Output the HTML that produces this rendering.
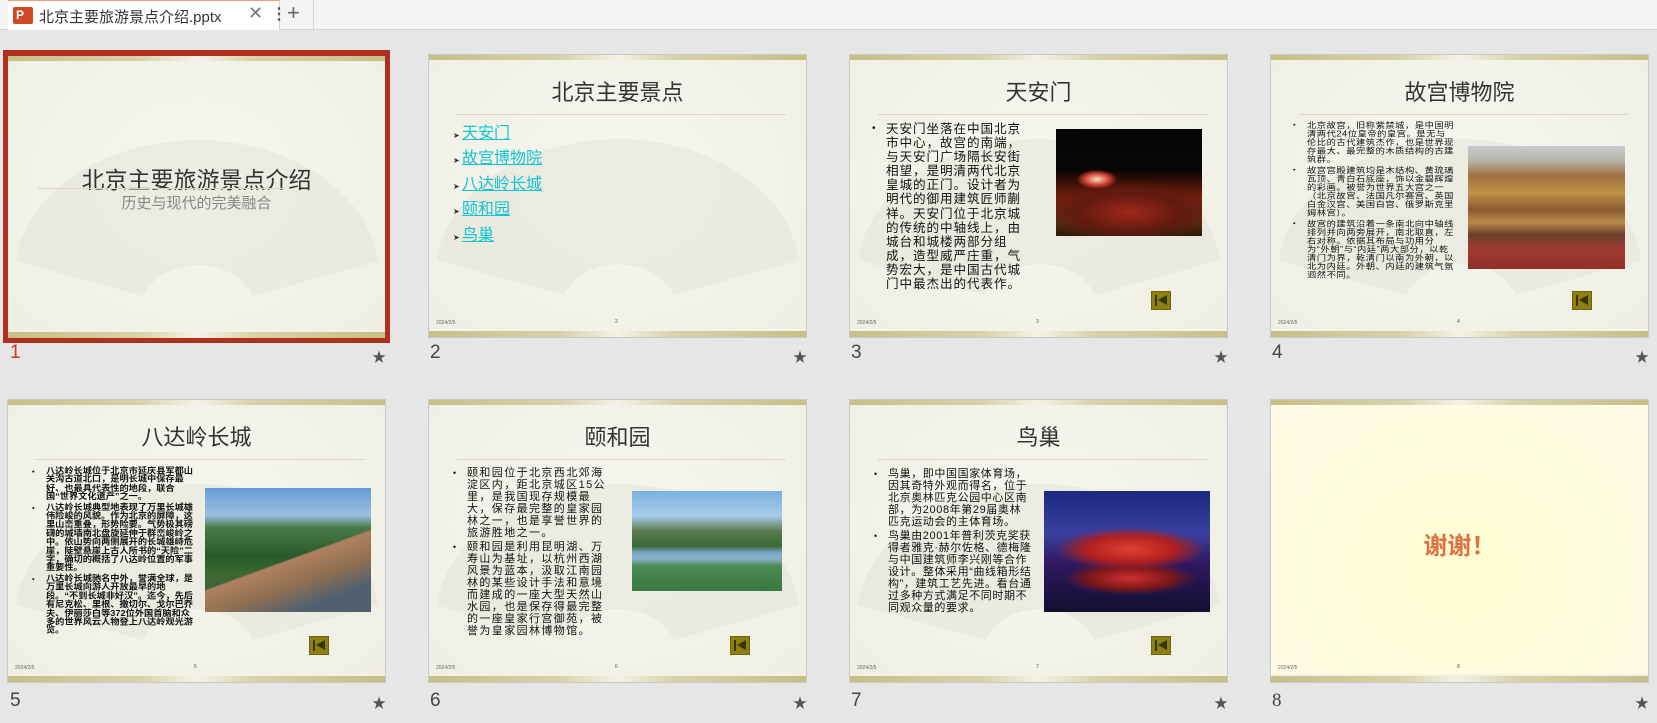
<!DOCTYPE html>
<html><head><meta charset="utf-8"><style>
*{margin:0;padding:0;box-sizing:border-box}
body{width:1657px;height:723px;background:#e6e6e6;position:relative;overflow:hidden;font-family:"Liberation Sans","Noto Sans CJK SC",sans-serif}
.bar{position:absolute;left:0;top:0;width:1657px;height:30px;background:#f4f4f4;border-bottom:1px solid #d4d4d4}
.tab{position:absolute;left:8px;top:0;width:272px;height:30px;background:#fff;border-top:1px solid #f0a080;border-right:1px solid #d4d4d4}
.slide{position:absolute;width:377px;height:282px;background:radial-gradient(ellipse at 50% 45%,#f7f7f0,#efeee4);overflow:hidden;outline:1px solid #c8c8c8}
.slide .tb{position:absolute;left:0;top:0;width:100%;height:5px;background:linear-gradient(90deg,#c8bf86,#d8d2a8 35%,#f4f2e6 50%,#d8d2a8 65%,#c8bf86)}
.slide .bb{position:absolute;left:0;bottom:0;width:100%;height:8px;border-top:2px solid #f4f2e8;background:linear-gradient(90deg,#c8bf86,#d8d2a8 35%,#f4f2e6 50%,#d8d2a8 65%,#c8bf86)}
.fan{position:absolute;left:0;top:0}
.title{position:absolute;left:0;width:100%;top:20px;text-align:center;font-size:22px;color:#333}
.rule{position:absolute;left:28px;right:20px;top:59px;height:1px;background:#dcd8bc}
.foot{position:absolute;left:7px;top:265px;font-size:5px;color:#666}
.pn{position:absolute;left:186px;top:264px;font-size:5px;color:#555}
.back{position:absolute;left:301px;top:236px;width:20px;height:19px;background:#8b8010;border:1px solid #6e650a}
.back:before{content:"";position:absolute;left:3px;top:3px;width:2px;height:11px;background:#3a3500}
.back:after{content:"";position:absolute;left:6px;top:3px;border-right:9px solid #3a3500;border-top:5.5px solid transparent;border-bottom:5.5px solid transparent}
.txt{position:absolute;color:#111;transform-origin:0 0}
.txt p{position:relative;padding-left:14px}
.txt p:before{content:"•";position:absolute;left:0;top:0;font-size:0.8em;letter-spacing:0}
.img{position:absolute}
.lbl{position:absolute;font-size:19px;color:#444}
.star{position:absolute;font-size:14px;color:#555}
</style></head><body>
<div class="bar"></div>
<div class="tab">
 <div style="position:absolute;left:5px;top:6px;width:20px;height:17px;background:#d24726;border-radius:2px"></div>
 <div style="position:absolute;left:8px;top:8px;color:#fff;font-size:12px;font-weight:bold;line-height:13px">P</div>
 <div style="position:absolute;left:31px;top:5px;font-size:15px;color:#333">北京主要旅游景点介绍.pptx</div>
 <div style="position:absolute;left:240px;top:2px;font-size:18px;color:#777">✕</div>
 <div style="position:absolute;left:263px;top:3px;font-size:16px;color:#555;font-weight:bold">⋮</div>
</div>
<div style="position:absolute;left:287px;top:0px;font-size:22px;color:#666">+</div>
<div style="position:absolute;left:313px;top:0;width:1px;height:30px;background:#d4d4d4"></div>

<!-- Slide 1 -->
<div style="position:absolute;left:3px;top:50px;width:387px;height:293px;background:#b03020"></div>
<div class="slide" style="left:8px;top:56px;outline:none">
 <svg class="fan" width="377" height="282"><path d="M8 205 A182 135 0 0 1 370 205 L245 240 A58 45 0 0 0 135 240 Z" fill="#e2e1d6" opacity=".5"/></svg>
 <div class="tb"></div><div class="bb"></div>
 <div style="position:absolute;left:0;width:100%;top:105px;text-align:center;font-size:23px;color:#333">北京主要旅游景点介绍</div>
 <div style="position:absolute;left:30px;right:100px;top:132px;height:1px;background:#dcd8bc"></div>
 <div style="position:absolute;left:0;width:100%;top:136px;text-align:center;font-size:15px;color:#888">历史与现代的完美融合</div>
</div>
<div class="lbl" style="left:10px;top:342px;color:#c43e1c">1</div><div class="star" style="left:372px;top:347px">★</div>

<!-- Slide 2 -->
<div class="slide" style="left:429px;top:55px">
 <svg class="fan" width="377" height="282"><path d="M8 205 A182 135 0 0 1 370 205 L245 240 A58 45 0 0 0 135 240 Z" fill="#e2e1d6" opacity=".5"/></svg>
 <div class="tb"></div><div class="bb"></div>
 <div class="title">北京主要景点</div><div class="rule"></div>
 <div style="position:absolute;left:24px;top:67px;font-size:16px;line-height:23.4px;color:#11c5d0">
  <div><span style="color:#333;font-size:8px">➤ </span><u>天安门</u></div>
  <div><span style="color:#333;font-size:8px">➤ </span><u>故宫博物院</u></div>
  <div><span style="color:#333;font-size:8px">➤ </span><u>八达岭长城</u></div>
  <div><span style="color:#333;font-size:8px">➤ </span><u>颐和园</u></div>
  <div><span style="color:#333;font-size:8px">➤ </span><u>鸟巢</u></div>
 </div>
 <div class="foot">2024/2/5</div><div class="pn">2</div>
</div>
<div class="lbl" style="left:430px;top:342px">2</div><div class="star" style="left:793px;top:347px">★</div>

<!-- Slide 3 -->
<div class="slide" style="left:850px;top:55px">
 <svg class="fan" width="377" height="282"><path d="M8 205 A182 135 0 0 1 370 205 L245 240 A58 45 0 0 0 135 240 Z" fill="#e2e1d6" opacity=".5"/></svg>
 <div class="tb"></div><div class="bb"></div>
 <div class="title">天安门</div><div class="rule"></div>
 <div class="txt" style="left:22px;top:67px;width:153px;font-size:12.6px;line-height:14.1px;letter-spacing:0.9px"><p>天安门坐落在中国北京市中心，故宫的南端，与天安门广场隔长安街相望，是明清两代北京皇城的正门。设计者为明代的御用建筑匠师蒯祥。天安门位于北京城的传统的中轴线上，由城台和城楼两部分组成，造型威严庄重，气势宏大，是中国古代城门中最杰出的代表作。</p></div>
 <div class="img" style="left:206px;top:74px;width:146px;height:107px;background:radial-gradient(ellipse 14% 9% at 28% 47%,#f8e0c0 0,#d04030 60%,transparent 100%),radial-gradient(ellipse 60% 30% at 50% 78%,#a02818 0,#601a10 60%,transparent 100%),linear-gradient(180deg,#050505 0,#080505 38%,#3a1008 50%,#7a2010 65%,#5a3010 85%,#2a1a08)"></div>
 <div class="back"></div>
 <div class="foot">2024/2/5</div><div class="pn">3</div>
</div>
<div class="lbl" style="left:851px;top:342px">3</div><div class="star" style="left:1214px;top:347px">★</div>

<!-- Slide 4 -->
<div class="slide" style="left:1271px;top:55px">
 <svg class="fan" width="377" height="282"><path d="M8 205 A182 135 0 0 1 370 205 L245 240 A58 45 0 0 0 135 240 Z" fill="#e2e1d6" opacity=".5"/></svg>
 <div class="tb"></div><div class="bb"></div>
 <div class="title">故宫博物院</div><div class="rule"></div>
 <div class="txt" style="left:22px;top:66px;width:162px;font-size:9.3px;line-height:10px;letter-spacing:0.5px;transform:scaleY(0.85)"><p>北京故宫，旧称紫禁城，是中国明清两代24位皇帝的皇宫。是无与伦比的古代建筑杰作，也是世界现存最大、最完整的木质结构的古建筑群。</p><p style="margin-top:3px">故宫宫殿建筑均是木结构、黄琉璃瓦顶、青白石底座，饰以金碧辉煌的彩画。被誉为世界五大宫之一（北京故宫、法国凡尔赛宫、英国白金汉宫、美国白宫、俄罗斯克里姆林宫）。</p><p style="margin-top:3px">故宫的建筑沿着一条南北向中轴线排列并向两旁展开，南北取直，左右对称。依据其布局与功用分为“外朝”与“内廷”两大部分，以乾清门为界，乾清门以南为外朝，以北为内廷。外朝、内廷的建筑气氛迥然不同。</p></div>
 <div class="img" style="left:197px;top:91px;width:157px;height:123px;background:linear-gradient(180deg,#c8ccd0 0,#b8b4a8 12%,#a07040 24%,#c09048 38%,#8a5a30 52%,#b88a4a 62%,#6a4028 72%,#a03a30 84%,#903028)"></div>
 <div class="back"></div>
 <div class="foot">2024/2/5</div><div class="pn">4</div>
</div>
<div class="lbl" style="left:1272px;top:342px">4</div><div class="star" style="left:1635px;top:347px">★</div>

<!-- Slide 5 -->
<div class="slide" style="left:8px;top:400px">
 <svg class="fan" width="377" height="282"><path d="M8 205 A182 135 0 0 1 370 205 L245 240 A58 45 0 0 0 135 240 Z" fill="#e2e1d6" opacity=".5"/></svg>
 <div class="tb"></div><div class="bb"></div>
 <div class="title">八达岭长城</div><div class="rule"></div>
 <div class="txt" style="left:24px;top:67px;width:164px;font-size:9.2px;line-height:9.4px;font-weight:bold;transform:scaleY(0.92)"><p>八达岭长城位于北京市延庆县军都山关沟古道北口，是明长城中保存最好、也最具代表性的地段，联合国“世界文化遗产”之一。</p><p style="margin-top:2px">八达岭长城典型地表现了万里长城雄伟险峻的风貌。作为北京的屏障，这里山峦重叠，形势险要。气势极其磅礴的城墙南北盘旋延伸于群峦峻岭之中。依山势向两侧展开的长城雄峙危崖，陡壁悬崖上古人所书的“天险”二字，确切的概括了八达岭位置的军事重要性。</p><p style="margin-top:2px">八达岭长城驰名中外，誉满全球，是万里长城向游人开放最早的地段。“不到长城非好汉”。迄今，先后有尼克松、里根、撒切尔、戈尔巴乔夫、伊丽莎白等372位外国首脑和众多的世界风云人物登上八达岭观光游览。</p></div>
 <div class="img" style="left:197px;top:88px;width:166px;height:124px;background:linear-gradient(160deg,transparent 55%,#b08060 56%,#907050 70%,#506070 85%),linear-gradient(180deg,#6a9ad8 0,#9ac0e0 22%,#4a7a48 32%,#2a5a28 55%,#3a6a30 70%,#4a5a40)"></div>
 <div class="back"></div>
 <div class="foot">2024/2/5</div><div class="pn">5</div>
</div>
<div class="lbl" style="left:10px;top:690px">5</div><div class="star" style="left:372px;top:693px">★</div>

<!-- Slide 6 -->
<div class="slide" style="left:429px;top:400px">
 <svg class="fan" width="377" height="282"><path d="M8 205 A182 135 0 0 1 370 205 L245 240 A58 45 0 0 0 135 240 Z" fill="#e2e1d6" opacity=".5"/></svg>
 <div class="tb"></div><div class="bb"></div>
 <div class="title">颐和园</div><div class="rule"></div>
 <div class="txt" style="left:24px;top:68px;width:154px;font-size:11px;line-height:11.9px;letter-spacing:1.4px"><p>颐和园位于北京西北郊海淀区内，距北京城区15公里，是我国现存规模最大，保存最完整的皇家园林之一，也是享誉世界的旅游胜地之一。</p><p style="margin-top:3px">颐和园是利用昆明湖、万寿山为基址，以杭州西湖风景为蓝本，汲取江南园林的某些设计手法和意境而建成的一座大型天然山水园，也是保存得最完整的一座皇家行宫御苑，被誉为皇家园林博物馆。</p></div>
 <div class="img" style="left:203px;top:91px;width:150px;height:100px;background:linear-gradient(180deg,#7ab0e0 0,#a8cce8 25%,#5a7a50 40%,#3a6a38 55%,#7aa8c8 62%,#8ab0c8 68%,#4a8a50 75%,#3a7a40)"></div>
 <div class="back"></div>
 <div class="foot">2024/2/5</div><div class="pn">6</div>
</div>
<div class="lbl" style="left:430px;top:690px">6</div><div class="star" style="left:793px;top:693px">★</div>

<!-- Slide 7 -->
<div class="slide" style="left:850px;top:400px">
 <svg class="fan" width="377" height="282"><path d="M8 205 A182 135 0 0 1 370 205 L245 240 A58 45 0 0 0 135 240 Z" fill="#e2e1d6" opacity=".5"/></svg>
 <div class="tb"></div><div class="bb"></div>
 <div class="title">鸟巢</div><div class="rule"></div>
 <div class="txt" style="left:24px;top:68px;width:158px;font-size:11px;line-height:12px;letter-spacing:0.6px"><p>鸟巢，即中国国家体育场，因其奇特外观而得名，位于北京奥林匹克公园中心区南部，为2008年第29届奥林匹克运动会的主体育场。</p><p style="margin-top:2px">鸟巢由2001年普利茨克奖获得者雅克·赫尔佐格、德梅隆与中国建筑师李兴刚等合作设计。整体采用“曲线箱形结构”，建筑工艺先进。看台通过多种方式满足不同时期不同观众量的要求。</p></div>
 <div class="img" style="left:194px;top:91px;width:166px;height:121px;background:radial-gradient(ellipse 45% 18% at 52% 48%,#e04030 0,#b02020 60%,transparent 100%),radial-gradient(ellipse 40% 14% at 52% 72%,#d03030 0,#801818 60%,transparent 100%),linear-gradient(180deg,#1a2a80 0,#3a40a0 35%,#301860 60%,#101030)"></div>
 <div class="back"></div>
 <div class="foot">2024/2/5</div><div class="pn">7</div>
</div>
<div class="lbl" style="left:851px;top:690px">7</div><div class="star" style="left:1214px;top:693px">★</div>

<!-- Slide 8 -->
<div class="slide" style="left:1271px;top:400px;background:radial-gradient(ellipse at 50% 60%,#fefcd0,#fffbe8)">
 <div class="tb"></div><div class="bb"></div>
 <div style="position:absolute;left:0;width:100%;top:126px;text-align:center;font-size:24px;font-weight:bold;color:#e07040">谢谢！</div>
 <div class="foot">2024/2/5</div><div class="pn">8</div>
</div>
<div class="lbl" style="left:1272px;top:690px;font-family:'Liberation Serif',serif">8</div><div class="star" style="left:1635px;top:693px">★</div>
</body></html>
